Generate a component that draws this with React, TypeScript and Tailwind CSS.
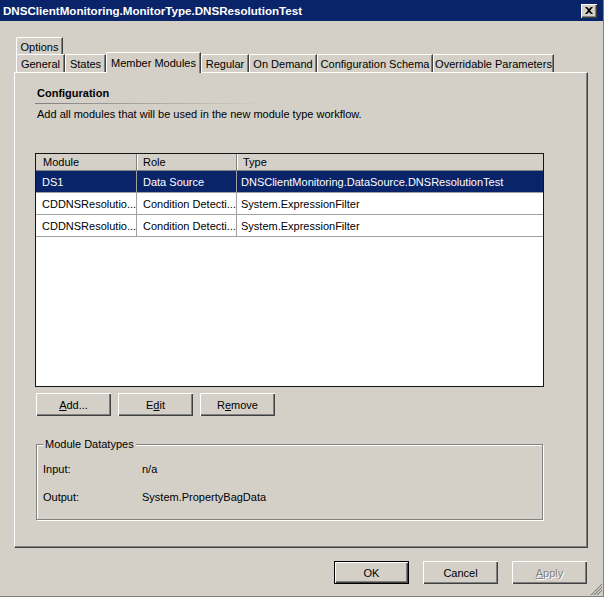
import React from "react";

const font = { fontFamily: '"Liberation Sans", Arial, sans-serif' };

function Tab({ label, w, selected }: { label: string; w: number; selected?: boolean }) {
  if (selected) {
    return (
      <div
        className="relative z-10 -mb-[1px] flex h-[21px] items-start justify-center rounded-tl-[2px] border-l border-t border-r border-l-white border-t-white border-r-[#404040] bg-[#d4d0c8] pt-[3px] shadow-[inset_-1px_0_#808080]"
        style={{ width: w }}
      >
        {label}
      </div>
    );
  }
  return (
    <div
      className="flex h-[18px] items-center justify-center rounded-tl-[2px] border-l border-t border-r border-l-white border-t-white border-r-[#404040] bg-[#d4d0c8] pt-[1px] shadow-[inset_-1px_0_#808080]"
      style={{ width: w }}
    >
      {label}
    </div>
  );
}

function Button({ children, isDefault, disabled }: { children: React.ReactNode; isDefault?: boolean; disabled?: boolean }) {
  return (
    <div
      className={
        "flex h-[23px] w-[75px] items-center justify-center bg-[#d4d0c8] " +
        (isDefault
          ? "border border-black shadow-[inset_1px_1px_white,inset_-1px_-1px_#404040,inset_-2px_-2px_#808080]"
          : "shadow-[inset_1px_1px_white,inset_-1px_-1px_#404040,inset_-2px_-2px_#808080]") +
        (disabled ? " text-[#808080] [text-shadow:1px_1px_0_white]" : " text-black")
      }
    >
      {children}
    </div>
  );
}

const rows = [
  { module: "DS1", role: "Data Source", type: "DNSClientMonitoring.DataSource.DNSResolutionTest", sel: true },
  { module: "CDDNSResolutio...", role: "Condition Detecti...", type: "System.ExpressionFilter" },
  { module: "CDDNSResolutio...", role: "Condition Detecti...", type: "System.ExpressionFilter" },
];

export default function App() {
  return (
    <div
      className="relative h-[597px] w-[604px] overflow-hidden border-b border-r border-[#808080] bg-[#d4d0c8] text-[11px] leading-[14px] text-black"
      style={font}
    >
      {/* title bar */}
      <div className="flex h-[21px] items-center justify-between bg-[#0a246a] pl-[3px] pr-[6px]">
        <span className="text-[11.6px] font-bold text-white">DNSClientMonitoring.MonitorType.DNSResolutionTest</span>
        <div className="flex h-[14px] w-[16px] items-center justify-center bg-[#d4d0c8] shadow-[inset_1px_1px_white,inset_-1px_-1px_#404040,inset_-2px_-2px_#808080]">
          <svg width="8" height="7" viewBox="0 0 8 7">
            <path d="M0 0h2l2 2 2-2h2L5 3.5 8 7H6L4 5 2 7H0l3-3.5z" fill="black" />
          </svg>
        </div>
      </div>

      {/* tabs */}
      <div className="pt-[16px]">
        <div className="flex h-[17px] items-start pl-[16px]">
          <div className="flex h-[18px] w-[47px] items-center justify-center rounded-tl-[2px] border-l border-t border-r border-l-white border-t-white border-r-[#404040] pt-[1px] shadow-[inset_-1px_0_#808080]">
            Options
          </div>
        </div>
        <div className="flex h-[18px] items-end pl-[16px]">
          <Tab label="General" w={49} />
          <Tab label="States" w={41} />
          <Tab label="Member Modules" w={95} selected />
          <Tab label="Regular" w={48} />
          <Tab label="On Demand" w={68} />
          <Tab label="Configuration Schema" w={116} />
          <Tab label="Overridable Parameters" w={121} />
        </div>
      </div>

      {/* panel */}
      <div className="ml-[14px] h-[476px] w-[574px] border-l border-t border-r border-b border-l-white border-t-white border-r-[#404040] border-b-[#404040] pl-[20px] pt-[13px] shadow-[inset_-1px_-1px_#808080]">
        <div className="pl-[2px] font-bold">Configuration</div>
        <div className="mt-[3px] h-[1px] w-[230px] bg-gradient-to-r from-[#808080] to-transparent" />
        <div className="mt-[3px] pl-[2px]">Add all modules that will be used in the new module type workflow.</div>

        {/* list view */}
        <div className="mt-[32px] h-[234px] w-[509px] border border-[#141414] bg-white">
          <div className="flex h-[17px] border-b border-[#808080] bg-[#d4d0c8]">
            <div className="flex w-[101px] items-center border-r border-[#808080] pl-[7px]">Module</div>
            <div className="flex w-[100px] items-center border-r border-[#808080] pl-[6px] shadow-[inset_1px_0_white]">Role</div>
            <div className="flex flex-1 items-center pl-[6px] shadow-[inset_1px_0_white]">Type</div>
          </div>
          {rows.map((r, i) => (
            <div
              key={i}
              className={
                "flex h-[22px] border-b border-[#a0a0a0] " + (r.sel ? "bg-[#0a246a] text-white" : "bg-white text-black")
              }
            >
              <div className="flex w-[101px] items-center border-r border-[#a0a0a0] pl-[6px]">{r.module}</div>
              <div className="flex w-[100px] items-center border-r border-[#a0a0a0] pl-[6px]">{r.role}</div>
              <div className="flex flex-1 items-center pl-[4px]">{r.type}</div>
            </div>
          ))}
        </div>

        {/* list buttons */}
        <div className="mt-[6px] flex gap-[7px] pl-[1px]">
          <Button>
            <span>
              <u>A</u>dd...
            </span>
          </Button>
          <Button>
            <span>
              E<u>d</u>it
            </span>
          </Button>
          <Button>
            <span>
              R<u>e</u>move
            </span>
          </Button>
        </div>

        {/* group box */}
        <div className="relative ml-[1px] mt-[28px] h-[76px] w-[507px] border border-[#808080] shadow-[inset_1px_1px_white,1px_1px_white]">
          <span className="absolute -top-[8px] left-[6px] bg-[#d4d0c8] px-[2px]">Module Datatypes</span>
          <div className="flex pl-[6px] pt-[17px]">
            <span className="w-[99px]">Input:</span>
            <span>n/a</span>
          </div>
          <div className="mt-[14px] flex pl-[6px]">
            <span className="w-[99px]">Output:</span>
            <span>System.PropertyBagData</span>
          </div>
        </div>
      </div>

      {/* dialog buttons */}
      <div className="mt-[13px] flex justify-end gap-[14px] pr-[16px]">
        <Button isDefault>OK</Button>
        <Button>Cancel</Button>
        <Button disabled>
          <span>
            <u>A</u>pply
          </span>
        </Button>
      </div>

      {/* size grip */}
      <svg className="absolute bottom-[1px] right-[1px]" width="12" height="12" viewBox="0 0 12 12">
        <path d="M11 1L1 11M11 4L4 11M11 7L7 11" stroke="white" strokeWidth="1" />
        <path d="M12 1L1 12M12 4L4 12M12 7L7 12" stroke="#808080" strokeWidth="1.2" />
      </svg>
    </div>
  );
}
